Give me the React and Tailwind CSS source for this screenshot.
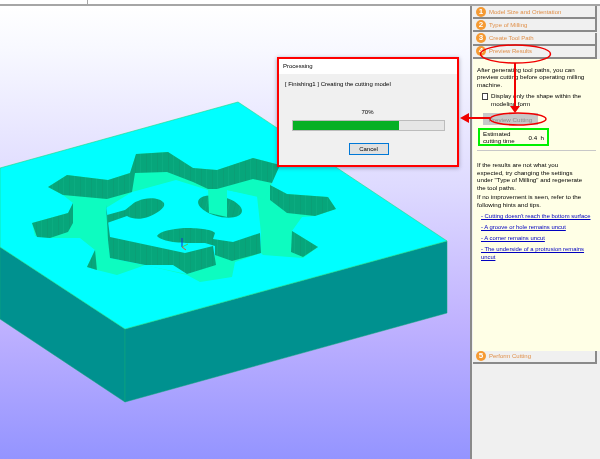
const steps = [
  { n: 1, label: "Model Size and Orientation" },
  { n: 2, label: "Type of Milling" },
  { n: 3, label: "Create Tool Path" },
  { n: 4, label: "Preview Results" },
];

const links = [
  "- Cutting doesn't reach the bottom surface",
  "- A groove or hole remains uncut",
  "- A corner remains uncut",
  "- The underside of a protrusion remains",
];

const WALL = "url(#wallStripes)";
const FLOOR = "#0dfcc0";
const TOP = "#00ffff";
const SIDE = "#00918f";

const StepRow = ({ n, label }) => (
  <div className="flex items-center h-[13px] ml-px mr-[3px] pl-[3px] gap-[3px] bg-[#f0f0f0] border-r-2 border-b-2 border-[#8a8a8a]">
    <span className="flex items-center justify-center w-[10px] h-[10px] rounded-full bg-[#f59a33] text-white text-[8px] font-bold leading-none">
      {n}
    </span>
    <span className="text-[6px] leading-none text-[#e0904a] whitespace-nowrap">{label}</span>
  </div>
);

const Scene = () => (
  <svg className="block w-full h-full" viewBox="0 6 470 453">
    <defs>
      <linearGradient id="sky" x1="0" y1="0" x2="0" y2="1">
        <stop offset="0" stopColor="#ffffff" />
        <stop offset="0.1" stopColor="#f7f8ff" />
        <stop offset="0.4" stopColor="#dedaff" />
        <stop offset="0.7" stopColor="#c0b2ff" />
        <stop offset="1" stopColor="#9494ff" />
      </linearGradient>
      <pattern id="wallStripes" width="11" height="20" patternUnits="userSpaceOnUse">
        <rect width="11" height="20" fill="#07a67b" />
        <rect x="3" width="1" height="20" fill="#0a9f76" />
        <rect x="8" width="1" height="20" fill="#0bac81" />
      </pattern>
    </defs>
    <rect x="0" y="6" width="470" height="453" fill="url(#sky)" />

    {/* block */}
    <polygon points="0,247 125,329 125,402 0,319" fill={SIDE} stroke="#10a878" strokeWidth="0.5" />
    <polygon points="125,329 447,241 447,313 125,402" fill={SIDE} stroke="#10a878" strokeWidth="0.5" />
    <polygon points="0,168 238,102 447,241 125,329 0,247" fill={TOP} stroke="#20d880" strokeWidth="0.6" />

    {/* pocket floor */}
    <polygon
      fill={FLOOR}
      points="48,187 67,175 108,180 130,173 136,154 168,152 193,168 217,170 253,158 280,165 270,185 287,194 328,197 336,209 315,216 302,217 292,231 318,247 303,258 263,255 261,253 235,262 232,277 200,282 187,275 145,265 137,268 117,275 97,270 87,267 95,250 80,238 50,238 35,236 32,223 68,213 73,203 63,195"
    />

    {/* island */}
    <polygon
      fill={TOP}
      points="106,208 132,192 176,180 208,190 227,190 257,196 261,233 261,253 215,255 213,265 187,274 110,258"
    />

    {/* keyhole and round pocket */}
    <path
      fill={WALL}
      d="M107 215 L125 210 C130 207 132 203 138 201 C146 197 160 197 164 203 C166 208 156 214 148 217 C140 220 132 219 127 216 L107 223 Z"
    />
    <ellipse cx="220" cy="206.5" rx="22.5" ry="10" transform="rotate(14 220 206.5)" fill={WALL} />
    <polygon fill={FLOOR} points="208,189 227,190 227,217 209,213" />
    <polygon fill={FLOOR} points="227,190 253,179 272,183 264,200 258,197" />

    {/* walls */}
    <polygon
      fill={WALL}
      points="48,187 67,175 108,180 130,173 136,154 168,152 193,168 217,170 253,158 280,165 272,183 253,179 217,189 208,189 193,182 167,172 135,173 132,192 107,199 63,195"
    />
    <polygon fill={WALL} points="32,223 68,213 73,203 73,223 68,232 50,238 37,237" />
    <polygon fill={WALL} points="95,250 97,270 87,267" />
    <polygon fill={WALL} points="106,205 110,237 110,258 108,240" />
    <polygon fill={WALL} points="110,237 185,253 213,246 216,265 187,274 173,265 145,265 110,258" />
    <path
      fill={WALL}
      d="M157 236 C160 231 172 229 184 228 C196 228 212 229 215 233 L213 239 L233 242 L260 233 L261 253 L232 261 L215 255 L215 246 L205 243 C190 243 165 244 157 236 Z"
    />
    <polygon fill={WALL} points="270,185 287,194 328,197 336,209 315,216 287,213 270,200" />
    <polygon fill={WALL} points="292,231 318,247 303,257 291,252" />

    {/* axis marker */}
    <line x1="182" y1="238" x2="182" y2="247" stroke="#1530d0" strokeWidth="1" />
    <line x1="182" y1="247" x2="188" y2="244" stroke="#40d060" strokeWidth="1" />
    <line x1="182" y1="247" x2="186" y2="250" stroke="#d05040" strokeWidth="1" />
  </svg>
);

const ProcessingDialog = () => (
  <div className="absolute left-[277px] top-[57px] w-[182px] h-[110px] flex flex-col bg-[#f0f0f0] border-2 border-[#ff0000] shadow-[0_1px_4px_rgba(60,60,90,0.45)] text-[6px] text-black blur-[0.25px]">
    <div className="h-[15px] bg-white flex items-center pl-[4px]">Processing</div>
    <div className="pl-[6px] pt-[7px] leading-none whitespace-nowrap">[ Finishing1 ] Creating the cutting model</div>
    <div className="text-center mt-[22px] leading-none pr-px">70%</div>
    <div className="ml-[13px] mr-[12px] mt-[5px] h-[11px] bg-[#e6e6e6] border border-[#bcbcbc]">
      <div className="h-full bg-[#06b025]" style={{ width: "70%" }} />
    </div>
    <div className="flex justify-center mt-[12px] pl-[1px]">
      <div className="w-[40px] h-[12px] flex items-center justify-center bg-[#e1e1e1] border border-[#0078d7] leading-none">
        Cancel
      </div>
    </div>
  </div>
);

const Annotations = () => (
  <svg className="absolute left-0 top-0 pointer-events-none" width="600" height="459" viewBox="0 0 600 459" fill="none">
    <ellipse cx="515.5" cy="54" rx="35" ry="9" stroke="#f00000" strokeWidth="1.5" />
    <ellipse cx="518" cy="119" rx="28" ry="6" stroke="#f00000" strokeWidth="1.5" />
    <line x1="515" y1="63" x2="515" y2="107" stroke="#f00000" strokeWidth="2" />
    <polygon points="510,106 520,106 515,113" fill="#f00000" />
    <line x1="490" y1="118" x2="468" y2="118" stroke="#f00000" strokeWidth="2" />
    <polygon points="469,113 469,123 460,118" fill="#f00000" />
  </svg>
);

const SidePanel = () => (
  <div className="flex-1 flex flex-col bg-[#f0f0f0] border-l-2 border-[#8a8a8a] blur-[0.25px]">
    <div className="flex flex-col gap-[0.33px]">
      {steps.map((s) => (
        <StepRow key={s.n} n={s.n} label={s.label} />
      ))}
    </div>
    <div className="h-[292px] ml-px bg-[#ffffe6] pl-[4px] pr-[4px] pt-[7px] text-[6.2px] leading-[7.5px] text-black whitespace-nowrap">
      <p>
        After generating tool paths, you can
        <br />
        preview cutting before operating milling
        <br />
        machine.
      </p>
      <div className="flex gap-[3px] mt-[4px] ml-[5px]">
        <span className="w-[6px] h-[7px] mt-[1px] border border-[#444] bg-white" />
        <p>
          Display only the shape within the
          <br />
          modeling form
        </p>
      </div>
      <div className="w-[55px] h-[12px] mt-[6px] ml-[6px] flex items-center justify-center bg-[#c8c8c8] text-[#8f8f8f]">
        Preview Cutting
      </div>
      <div className="w-[71px] h-[18px] mt-[3px] ml-px flex items-center justify-between pl-[3px] pr-[3px] border-2 border-[#00f000]">
        <p>
          Estimated
          <br />
          cutting time
        </p>
        <span className="whitespace-pre">0.4  h</span>
      </div>
      <div className="h-px mt-[4px] bg-[#c8c8c8]" />
      <p className="mt-[10px]">
        If the results are not what you
        <br />
        expected, try changing the settings
        <br />
        under "Type of Milling" and regenerate
        <br />
        the tool paths.
      </p>
      <p className="mt-[2px]">
        If no improvement is seen, refer to the
        <br />
        following hints and tips.
      </p>
      <ul className="mt-[5px] ml-[4px] flex flex-col gap-[3.5px] text-[5.9px] text-[#0000c0] underline">
        {links.map((l) => (
          <li key={l}>{l}</li>
        ))}
        <li className="-mt-[3.5px]">uncut</li>
      </ul>
    </div>
    <StepRow n={5} label="Perform Cutting" />
  </div>
);

export default function App() {
  return (
    <div className="relative w-[600px] h-[459px] overflow-hidden bg-white font-['Liberation_Sans',Arial,sans-serif]">
      <div className="relative h-[6px] border-b-2 border-[#a6a6a6]">
        <div className="absolute left-[87px] top-0 w-px h-[5px] bg-[#a6a6a6]" />
      </div>
      <div className="flex h-[453px]">
        <div className="w-[470px] h-full">
          <Scene />
        </div>
        <SidePanel />
      </div>
      <ProcessingDialog />
      <Annotations />
    </div>
  );
}
